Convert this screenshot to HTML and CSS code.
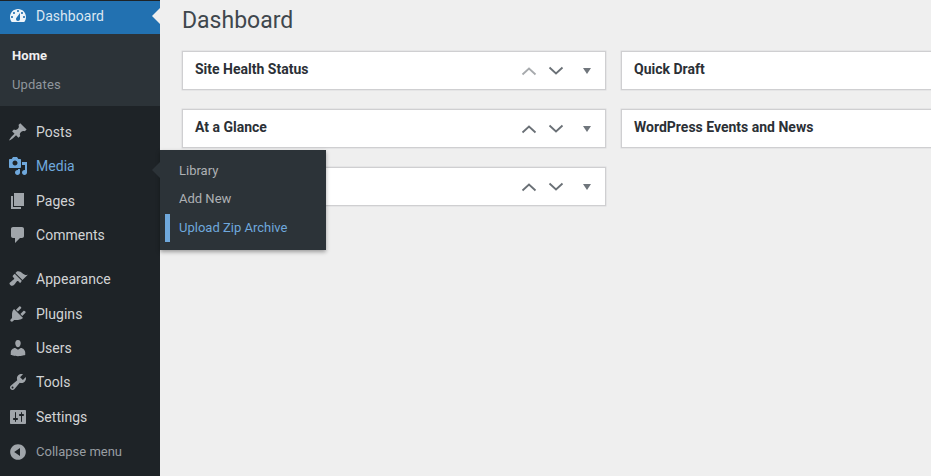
FILE: index.html
```html
<!DOCTYPE html>
<html lang="en">
<head>
<meta charset="utf-8">
<title>Dashboard</title>
<link rel="stylesheet" href="styles.css">
</head>
<body>
<div class="page">
  <nav class="sidebar">
    <a class="item item-active">
      <svg class="icon" viewBox="0 0 20 20"><path fill-rule="evenodd" d="M3.76 16h12.48c1.1-1.37 1.76-3.11 1.76-5 0-4.42-3.58-8-8-8s-8 3.58-8 8c0 1.89.66 3.63 1.76 5zM10 4c.55 0 1 .45 1 1s-.45 1-1 1-1-.45-1-1 .45-1 1-1zM6 6c.55 0 1 .45 1 1s-.45 1-1 1-1-.45-1-1 .45-1 1-1zm8 0c.55 0 1 .45 1 1s-.45 1-1 1-1-.45-1-1 .45-1 1-1zm-5.37 5.55L12 7v6c0 1.1-.9 2-2 2s-2-.9-2-2c0-.57.24-1.08.63-1.45zM4 10c.55 0 1 .45 1 1s-.45 1-1 1-1-.45-1-1 .45-1 1-1zm12 0c.55 0 1 .45 1 1s-.45 1-1 1-1-.45-1-1 .45-1 1-1z"/></svg>
      <span>Dashboard</span>
    </a>
    <div class="submenu">
      <a class="sub sub-current">Home</a>
      <a class="sub">Updates</a>
    </div>
    <div class="group group-first">
      <a class="item">
        <svg class="icon" viewBox="0 0 20 20"><path d="M10.44 3.02l1.82-1.82 6.36 6.35-1.83 1.82c-1.05-.68-2.48-.57-3.41.36l-.75.75c-.92.93-1.04 2.35-.35 3.41l-1.83 1.82-2.41-2.41-2.8 2.79c-.42.42-3.38 2.71-3.8 2.29s1.86-3.39 2.28-3.81l2.79-2.79L4.1 9.36l1.83-1.82c1.05.69 2.48.57 3.4-.36l.75-.75c.93-.92 1.05-2.35.36-3.41z"/></svg>
        <span>Posts</span>
      </a>
      <a class="item item-hover">
        <svg class="icon" viewBox="0 0 20 20"><path fill-rule="evenodd" d="M13 11V4c0-.55-.45-1-1-1h-1.67L9 1H5L3.67 3H2c-.55 0-1 .45-1 1v7c0 .55.45 1 1 1h10c.55 0 1-.45 1-1zM7 4.5c1.38 0 2.5 1.12 2.5 2.5S8.38 9.5 7 9.5 4.5 8.38 4.5 7 5.62 4.5 7 4.5zM14 6h5v10.5c0 1.38-1.12 2.5-2.5 2.5S14 17.88 14 16.5s1.12-2.5 2.5-2.5c.17 0 .34.02.5.05V9h-3V6zm-4 8.05V13h2v3.5c0 1.38-1.12 2.5-2.5 2.5S7 17.88 7 16.5 8.12 14 9.5 14c.17 0 .34.02.5.05z"/></svg>
        <span>Media</span>
      </a>
      <a class="item">
        <svg class="icon" viewBox="0 0 20 20"><path d="M6 15V2h10v13H6zm-1 1h8v2H3V5h2v11z"/></svg>
        <span>Pages</span>
      </a>
      <a class="item">
        <svg class="icon" viewBox="0 0 20 20"><path d="M5 2h9c1.1 0 2 .9 2 2v7c0 1.1-.9 2-2 2h-2l-5 5v-5H5c-1.1 0-2-.9-2-2V4c0-1.1.9-2 2-2z"/></svg>
        <span>Comments</span>
      </a>
    </div>
    <div class="group">
      <a class="item">
        <svg class="icon" viewBox="0 0 20 20"><path d="M14.48 11.06L7.41 3.99l1.5-1.5c.5-.56 2.3-.47 3.51.32 1.21.8 1.43 1.28 2.91 2.1 1.18.64 2.45 1.26 4.45.85zm-.71.71L6.7 4.7 4.93 6.47c-.39.39-.39 1.02 0 1.41l1.06 1.06c.39.39.39 1.03 0 1.42-.6.6-1.43 1.11-2.21 1.69-.35.26-.7.53-1.01.84C1.43 13.23.91 14.57 2.3 16c1.39 1.43 2.78.91 4.12-.43.31-.31.58-.66.84-1.01.58-.78 1.09-1.61 1.69-2.21.39-.39 1.03-.39 1.42 0l1.06 1.06c.39.39 1.02.39 1.41 0z"/></svg>
        <span>Appearance</span>
      </a>
      <a class="item">
        <svg class="icon" viewBox="0 0 20 20"><path d="M13.11 4.36L9.87 7.6 8 5.73l3.24-3.24c.35-.34 1.05-.2 1.56.32.52.51.66 1.21.31 1.55zm-8 1.77l.91-1.12 9.01 9.01-1.19.84c-.71.71-2.63 1.16-3.82 1.16H6.14L4.9 17.26c-.59.59-1.54.59-2.12 0-.59-.58-.59-1.53 0-2.12l1.24-1.24v-3.88c0-1.13.4-3.19 1.09-3.89zm7.26 3.97l3.24-3.24c.34-.35 1.04-.21 1.55.31.52.51.66 1.21.31 1.55l-3.24 3.25z"/></svg>
        <span>Plugins</span>
      </a>
      <a class="item">
        <svg class="icon" viewBox="0 0 20 20"><path d="M10 9.25c-2.27 0-2.73-3.44-2.73-3.44C7 4.02 7.82 2 9.97 2c2.16 0 2.98 2.02 2.71 3.81 0 0-.41 3.44-2.68 3.44zm0 2.57L12.72 10c2.39 0 4.52 2.33 4.52 4.53v2.49s-3.65 1.13-7.24 1.13c-3.65 0-7.24-1.13-7.24-1.13v-2.49c0-2.25 1.94-4.48 4.47-4.48z"/></svg>
        <span>Users</span>
      </a>
      <a class="item">
        <svg class="icon" viewBox="0 0 20 20"><path fill-rule="evenodd" d="M16.68 9.77c-1.34 1.34-3.3 1.67-4.95.99l-5.41 6.52c-.99.99-2.59.99-3.58 0s-.99-2.59 0-3.57l6.52-5.42c-.68-1.65-.35-3.61.99-4.95 1.28-1.28 3.12-1.62 4.72-1.06l-2.89 2.89 2.82 2.82 2.86-2.87c.53 1.58.18 3.39-1.08 4.65zM3.81 16.21c.4.39 1.04.39 1.43 0 .4-.4.4-1.04 0-1.43-.39-.4-1.03-.4-1.43 0-.39.39-.39 1.03 0 1.43z"/></svg>
        <span>Tools</span>
      </a>
      <a class="item">
        <svg class="icon" viewBox="0 0 20 20"><path fill-rule="evenodd" d="M18 16V4c0-.55-.45-1-1-1H3c-.55 0-1 .45-1 1v12c0 .55.45 1 1 1h14c.55 0 1-.45 1-1zM8 11h1c.55 0 1 .45 1 1s-.45 1-1 1H8v1.5c0 .28-.22.5-.5.5s-.5-.22-.5-.5V13H6c-.55 0-1-.45-1-1s.45-1 1-1h1V5.5c0-.28.22-.5.5-.5s.5.22.5.5V11zm5-2h-1c-.55 0-1-.45-1-1s.45-1 1-1h1V5.5c0-.28.22-.5.5-.5s.5.22.5.5V7h1c.55 0 1 .45 1 1s-.45 1-1 1h-1v5.5c0 .28-.22.5-.5.5s-.5-.22-.5-.5V9z"/></svg>
        <span>Settings</span>
      </a>
      <a class="item item-collapse">
        <svg class="icon" viewBox="0 0 20 20"><path fill-rule="evenodd" d="M10 2.16c4.33 0 7.84 3.51 7.84 7.84s-3.51 7.84-7.84 7.84S2.16 14.33 2.16 10 5.71 2.16 10 2.16zm2 11.72V6.12L6.18 9.97z"/></svg>
        <span>Collapse menu</span>
      </a>
    </div>
  </nav>

  <main class="content">
    <h1 class="title">Dashboard</h1>
    <div class="columns">
      <div class="column">
        <section class="box">
          <h2 class="box-title">Site Health Status</h2>
          <div class="controls">
            <svg class="chev chev-off" viewBox="0 0 16 10"><polyline points="1.5,8.5 8,2.5 14.5,8.5"/></svg>
            <svg class="chev" viewBox="0 0 16 10"><polyline points="1.5,1.5 8,7.5 14.5,1.5"/></svg>
            <svg class="tri" viewBox="0 0 8 6"><polygon points="0,0 8,0 4,6"/></svg>
          </div>
        </section>
        <section class="box">
          <h2 class="box-title">At a Glance</h2>
          <div class="controls">
            <svg class="chev" viewBox="0 0 16 10"><polyline points="1.5,8.5 8,2.5 14.5,8.5"/></svg>
            <svg class="chev" viewBox="0 0 16 10"><polyline points="1.5,1.5 8,7.5 14.5,1.5"/></svg>
            <svg class="tri" viewBox="0 0 8 6"><polygon points="0,0 8,0 4,6"/></svg>
          </div>
        </section>
        <section class="box">
          <div class="controls">
            <svg class="chev" viewBox="0 0 16 10"><polyline points="1.5,8.5 8,2.5 14.5,8.5"/></svg>
            <svg class="chev" viewBox="0 0 16 10"><polyline points="1.5,1.5 8,7.5 14.5,1.5"/></svg>
            <svg class="tri" viewBox="0 0 8 6"><polygon points="0,0 8,0 4,6"/></svg>
          </div>
        </section>
      </div>
      <div class="column column-wide">
        <section class="box"><h2 class="box-title">Quick Draft</h2></section>
        <section class="box"><h2 class="box-title">WordPress Events and News</h2></section>
      </div>
    </div>
  </main>

  <span class="current-arrow"></span>
  <div class="flyout">
    <span class="flyout-arrow"></span>
    <a class="fly">Library</a>
    <a class="fly">Add New</a>
    <a class="fly fly-current">Upload Zip Archive</a>
  </div>
</div>
</body>
</html>
```

FILE: styles.css
```css
* { box-sizing: border-box; }

html, body {
  margin: 0;
  height: 100%;
  overflow: hidden;
}

body {
  font-family: Roboto, "Liberation Sans", sans-serif;
  background: #efefef;
}

.page {
  position: relative;
  display: flex;
  width: 931px;
  height: 476px;
  overflow: hidden;
}

/* Sidebar */
.sidebar {
  flex: 0 0 160px;
  background: #1e2327;
  padding-top: 1px;
  color: #d4d5d7;
}

.item {
  display: flex;
  align-items: center;
  height: 34.3px;
  padding-left: 8px;
  font-size: 14px;
  letter-spacing: 0.03px;
  color: #d2d3d5;
}

.icon {
  flex: 0 0 20px;
  width: 20px;
  height: 20px;
  margin-right: 8px;
  fill: #a0a5aa;
}

.item-active {
  height: 33px;
  padding-bottom: 3px;
  background: #2271b1;
  color: #dbe7f2;
}

.item-active .icon { fill: #eef4f9; }

.item-hover { color: #6fa8dc; }
.item-hover .icon { fill: #6fa8dc; }

.item-collapse {
  margin-top: 1px;
  font-size: 13px;
  letter-spacing: 0;
  color: #989da2;
}

.submenu {
  display: flex;
  flex-direction: column;
  height: 72px;
  padding-top: 7px;
  background: #2c3338;
}

.sub {
  display: flex;
  align-items: center;
  height: 28.7px;
  padding-left: 12px;
  font-size: 13px;
  letter-spacing: 0.1px;
  color: #8f969c;
}

.sub-current {
  font-weight: 700;
  color: #f0f0f1;
}

.group { margin-top: 10px; }
.group-first { margin-top: 9px; }

/* Main */
.content {
  flex: 1 1 auto;
  min-width: 0;
  padding: 0 0 0 22px;
}

.title {
  margin: 0;
  padding-top: 7px;
  height: 51px;
  font-size: 23px;
  line-height: 27px;
  font-weight: 400;
  color: #3f474d;
}

.columns {
  display: flex;
  gap: 15px;
}

.column {
  flex: 0 0 424px;
  display: flex;
  flex-direction: column;
  gap: 19px;
}

.column-wide { flex-basis: 400px; }

.box {
  display: flex;
  align-items: center;
  height: 39px;
  padding: 0 12px 0 12px;
  background: #fff;
  border: 1px solid #cfcfd1;
  box-shadow: 0 0 0 0.5px #dcdcdd;
}

.box-title {
  margin: 0;
  padding-bottom: 4px;
  font-size: 14px;
  font-weight: 700;
  color: #2b3036;
}

.controls {
  display: flex;
  align-items: center;
  margin-left: auto;
}

.chev {
  width: 16px;
  height: 10px;
  margin-left: 11px;
  fill: none;
  stroke: #6a7076;
  stroke-width: 1.8;
}

.chev-off { stroke: #a7aaad; }

.tri {
  width: 8px;
  height: 6px;
  margin-left: 19px;
  margin-right: 2px;
  fill: #70767c;
}

/* Overlays */
.current-arrow {
  position: absolute;
  left: 152px;
  top: 8px;
  border: 8px solid transparent;
  border-left: 0;
  border-right-color: #efefef;
}

.flyout {
  position: absolute;
  left: 160px;
  top: 150px;
  width: 166px;
  height: 100px;
  padding-top: 6px;
  background: #2c3338;
  box-shadow: 0 2px 4px rgba(0, 0, 0, 0.35);
}

.flyout-arrow {
  position: absolute;
  left: -8px;
  top: 12px;
  border: 8px solid transparent;
  border-left: 0;
  border-right-color: #2c3338;
}

.fly {
  display: flex;
  align-items: center;
  height: 28.3px;
  padding-left: 19px;
  font-size: 13px;
  color: #aeb1b4;
}

.fly-current {
  margin: 1px 0 0 5px;
  padding-left: 9px;
  border-left: 5px solid #6fa8dc;
  color: #6fa8dc;
}
```
